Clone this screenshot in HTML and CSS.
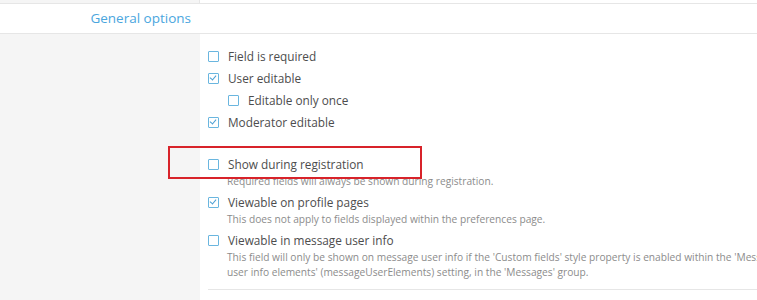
FILE: index.html
```html
<!DOCTYPE html>
<html>
<head>
    <title>Custom field options</title>
    <link rel="stylesheet" href="styles.css">
</head>
<body>
    <div class="top-strip">
        <div class="top-left"></div>
        <div class="top-right"></div>
    </div>

    <div class="form-header">
        <div class="header-label">General options</div>
        <div></div>
    </div>

    <div class="form-row">
        <div class="row-label"></div>
        <div class="row-input">
            <ul class="check-list">
                <li class="check-item">
                    <label><span class="box"></span>Field is required</label>
                </li>
                <li class="check-item">
                    <label><span class="box checked"></span>User editable</label>
                    <ul class="check-list nested">
                        <li class="check-item">
                            <label><span class="box"></span>Editable only once</label>
                        </li>
                    </ul>
                </li>
                <li class="check-item">
                    <label><span class="box checked"></span>Moderator editable</label>
                </li>
                <li class="check-item spaced">
                    <label><span class="box"></span>Show during registration</label>
                    <div class="hint">Required fields will always be shown during registration.</div>
                </li>
                <li class="check-item">
                    <label><span class="box checked"></span>Viewable on profile pages</label>
                    <div class="hint">This does not apply to fields displayed within the preferences page.</div>
                </li>
                <li class="check-item">
                    <label><span class="box"></span>Viewable in message user info</label>
                    <div class="hint">This field will only be shown on message user info if the 'Custom fields' style property is enabled within the 'Message user info elements' (messageUserElements) setting, in the 'Messages' group.</div>
                </li>
            </ul>
        </div>
    </div>

    <div class="highlight"></div>
</body>
</html>
```

FILE: styles.css
```css
body {
    margin: 0;
    font-family: "Open Sans", "Noto Sans", sans-serif;
    color: #4d4d4d;
    background: #fff;
    overflow: hidden;
}
.top-strip {
    display: grid;
    grid-template-columns: 200px 1fr;
    height: 3px;
    border-bottom: 1px solid #e6e6e6;
}
.top-left {
    background-color: #f5f5f5;
    border-right: 1px solid #e6e6e6;
}
.form-header {
    display: grid;
    grid-template-columns: 200px 1fr;
    height: 29px;
    border-bottom: 1px solid #e6e6e6;
}
.header-label {
    text-align: right;
    padding-right: 9px;
    line-height: 29px;
    font-size: 13.5px;
    color: #4aa6de;
}
.form-row {
    display: grid;
    grid-template-columns: 200px 1fr;
    min-height: 270px;
}
.row-label {
    background-color: #f5f5f5;
}
.row-input {
    padding: 11px 0 0 8px;
    width: 588px;
}
.row-input > .check-list {
    padding-bottom: 9px;
    border-bottom: 1px solid #e6e6e6;
}
.check-list {
    list-style: none;
    margin: 0;
    padding: 0;
}
.check-list.nested {
    padding-left: 20px;
}
.check-item label {
    display: flex;
    align-items: center;
    line-height: 22px;
    font-size: 11.8px;
    white-space: nowrap;
}
.check-item.spaced {
    margin-top: 20px;
}
.check-item.spaced ~ .check-item {
    margin-top: 2px;
}
.box {
    width: 9px;
    height: 9px;
    border: 1px solid #6ab6df;
    border-radius: 1px;
    margin-right: 9px;
    flex-shrink: 0;
    position: relative;
}
.box.checked::after {
    content: "";
    position: absolute;
    left: 2px;
    top: 0px;
    width: 3px;
    height: 5px;
    border: solid #4a9fd4;
    border-width: 0 1.5px 1.5px 0;
    transform: rotate(40deg);
}
.hint {
    margin-top: -1px;
    padding-left: 19px;
    font-size: 10.2px;
    line-height: 15px;
    color: #8c8c8c;
}
.highlight {
    position: absolute;
    left: 168px;
    top: 146px;
    width: 250px;
    height: 29px;
    border: 2px solid #d8232a;
}
```
